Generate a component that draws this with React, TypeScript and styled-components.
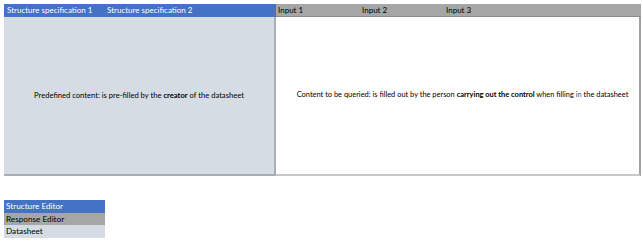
import React from "react";
import styled, { createGlobalStyle } from "styled-components";

const Global = createGlobalStyle`
  html, body { margin: 0; padding: 0; background: #fff; }
  body { font-family: Lato, "Open Sans", "Liberation Sans", sans-serif; color: #000; }
`;

const Page = styled.div`
  padding: 4px 0 0 4px;
  width: 643px;
  box-sizing: border-box;
`;

const Sheet = styled.div`
  display: grid;
  grid-template-columns: 272px 365px;
  grid-template-rows: 13px 159px;
  width: 637px;
`;

const HeaderBand = styled.div<{ $tone: "blue" | "gray"; $cols: number }>`
  display: grid;
  grid-template-columns: repeat(${(p) => p.$cols}, ${(p) => (p.$tone === "blue" ? "100px" : "84px")});
  align-items: center;
  background: ${(p) => (p.$tone === "blue" ? "#4472c4" : "#a6a6a6")};
  color: ${(p) => (p.$tone === "blue" ? "#fff" : "#000")};
  font-size: 8px;
  padding-left: ${(p) => (p.$tone === "blue" ? "3px" : "2px")};
  border-bottom: 1px solid ${(p) => (p.$tone === "blue" ? "#4472c4" : "#8c8c8c")};
  box-sizing: border-box;
  white-space: nowrap;
`;

const Panel = styled.div<{ $filled?: boolean }>`
  display: flex;
  align-items: center;
  justify-content: center;
  background: ${(p) => (p.$filled ? "#d6dce4" : "#fff")};
  border-right: 2px solid ${(p) => (p.$filled ? "#a9aeb6" : "#a0a0a0")};
  border-bottom: 2px solid ${(p) => (p.$filled ? "#a9aeb6" : "#c8c8c8")};
  font-size: ${(p) => (p.$filled ? "7.6px" : "7.45px")};
  padding-left: ${(p) => (p.$filled ? "0" : "10px")};
  color: #000;
  padding-bottom: 2px;
  box-sizing: border-box;
  white-space: nowrap;
`;

const Blue = styled.span`
  color: #2f4d8a;
`;

const Nav = styled.div`
  margin-top: 24px;
  width: 101px;
  display: flex;
  flex-direction: column;
`;

const NavItem = styled.div<{ $tone: "blue" | "gray" | "light" }>`
  height: 12.5px;
  display: flex;
  align-items: center;
  padding-left: 2px;
  font-size: 8.2px;
  background: ${(p) => (p.$tone === "blue" ? "#4472c4" : p.$tone === "gray" ? "#a6a6a6" : "#d6dce4")};
  color: ${(p) => (p.$tone === "blue" ? "#fff" : "#000")};
`;

export default function App() {
  return (
    <>
      <Global />
      <Page>
        <Sheet>
          <HeaderBand $tone="blue" $cols={2}>
            <span>Structure specification 1</span>
            <span>Structure specification 2</span>
          </HeaderBand>
          <HeaderBand $tone="gray" $cols={3}>
            <span>Input 1</span>
            <span>Input 2</span>
            <span>Input 3</span>
          </HeaderBand>
          <Panel $filled>
            <span>
              Predefined content: is pre-filled by the <b>creator</b> of the datasheet
            </span>
          </Panel>
          <Panel>
            <span>
              Content to be queried: is filled out by the person <b>carrying out the control</b> when filling <Blue>in</Blue> the datasheet
            </span>
          </Panel>
        </Sheet>
        <Nav>
          <NavItem $tone="blue">Structure Editor</NavItem>
          <NavItem $tone="gray">Response Editor</NavItem>
          <NavItem $tone="light">Datasheet</NavItem>
        </Nav>
      </Page>
    </>
  );
}
